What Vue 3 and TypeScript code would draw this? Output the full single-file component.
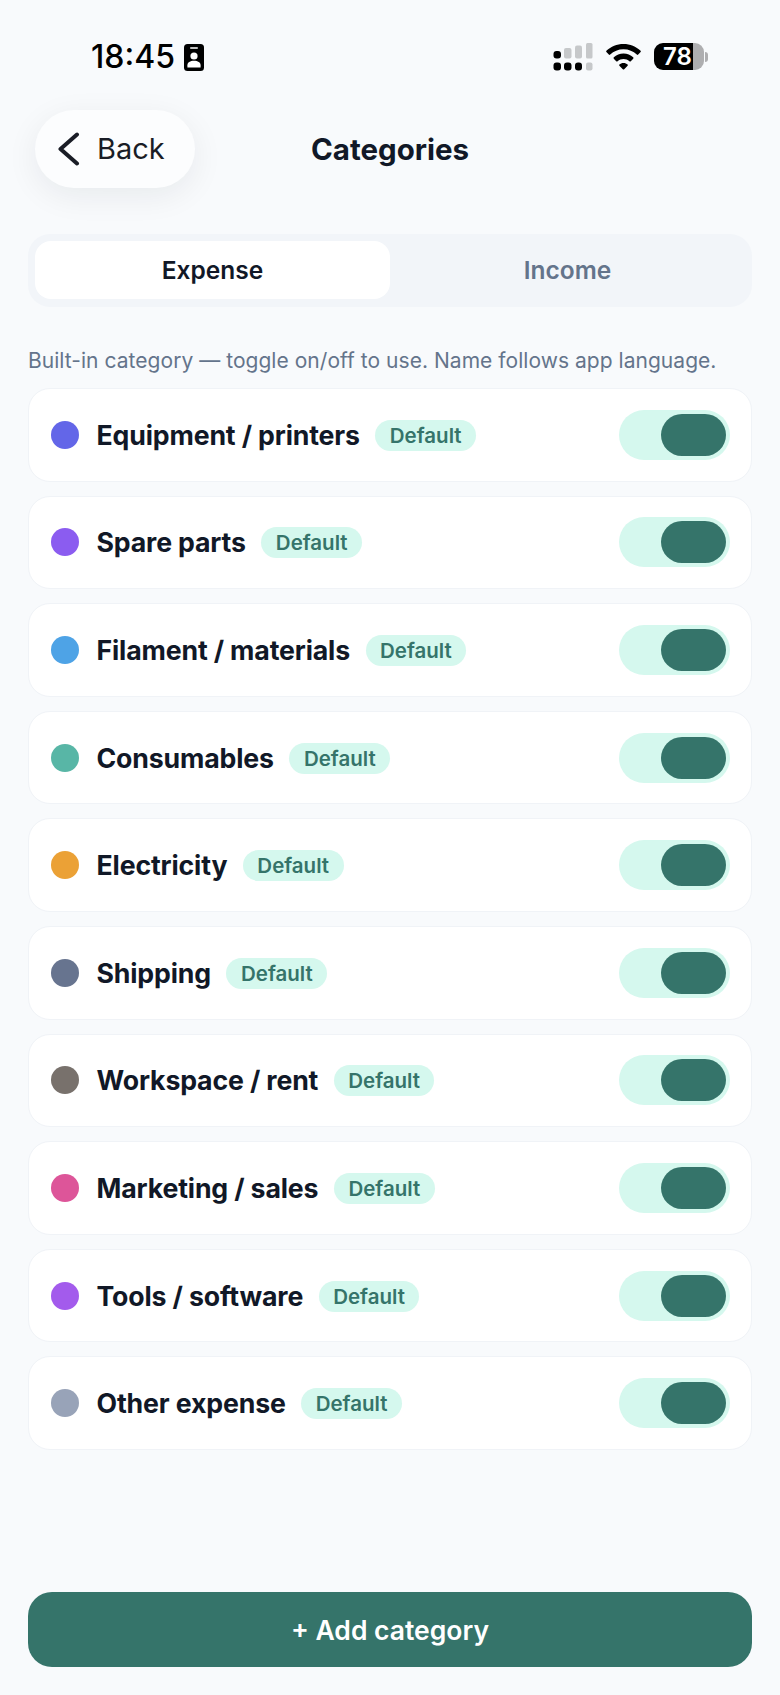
<script setup lang="ts">
interface Category { name: string; color: string }
const categories: Category[] = [
  { name: 'Equipment / printers', color: '#6366e8' },
  { name: 'Spare parts', color: '#8b5cf0' },
  { name: 'Filament / materials', color: '#4ea3e6' },
  { name: 'Consumables', color: '#58b6a6' },
  { name: 'Electricity', color: '#eba136' },
  { name: 'Shipping', color: '#67748f' },
  { name: 'Workspace / rent', color: '#78716c' },
  { name: 'Marketing / sales', color: '#dd5599' },
  { name: 'Tools / software', color: '#a35bec' },
  { name: 'Other expense', color: '#98a3b8' },
]
</script>

<template>
  <div class="page">
    <div class="status">
      <div class="status-left">
        <span class="time">18:45</span>
        <svg class="id" width="20" height="27" viewBox="0 0 20 27">
          <rect width="20" height="27" rx="3.5" fill="#000" />
          <rect x="6" y="3.2" width="8" height="1.6" rx=".8" fill="#fff" />
          <circle cx="10" cy="12" r="3.6" fill="#fff" />
          <path d="M3.4 23.5v-2.2c0-3 2.8-4.5 6.600-4.500s6.600 1.500 6.600 4.500v2.200z" fill="#fff" />
        </svg>
      </div>
      <div class="status-right">
        <svg width="40" height="28" viewBox="0 0 40 28">
          <rect x="0.500" y="8" width="7.500" height="7.500" rx="3" fill="#000" />
          <rect x="0.500" y="19.500" width="7.500" height="8" rx="3" fill="#000" />
          <rect x="11" y="5" width="7.500" height="10.500" rx="2" fill="#c6c8ca" />
          <rect x="11" y="19.500" width="7.500" height="8" rx="3" fill="#000" />
          <rect x="22" y="2.500" width="7" height="13" rx="2" fill="#c6c8ca" />
          <rect x="22" y="19.500" width="7" height="8" rx="3" fill="#000" />
          <rect x="33" y="0" width="6.500" height="15.500" rx="1.500" fill="#c6c8ca" />
          <rect x="33" y="19.500" width="6.500" height="8" rx="2" fill="#c6c8ca" />
        </svg>
        <svg class="wifi" width="35" height="26" viewBox="0 0 35 26">
          <path d="M17.500 0C10.800 0 5 2.500.4 6.700c-.4.400-.4 1 0 1.400l2.400 2.500c.4.400 1 .4 1.400 0 3.500-3.300 8.100-5.300 13.300-5.300s9.800 2 13.300 5.300c.4.400 1 .4 1.400 0l2.400-2.500c.4-.400.4-1 0-1.400C30 2.500 24.200 0 17.500 0z" fill="#000" />
          <path d="M17.500 9.500c-3.700 0-7.100 1.400-9.700 3.800-.4.400-.4 1 0 1.400l2.400 2.500c.4.400 1 .4 1.400 0 1.600-1.400 3.600-2.200 5.900-2.200s4.300.8 5.900 2.200c.4.400 1 .4 1.400 0l2.400-2.500c.4-.4.4-1 0-1.400-2.600-2.400-6-3.800-9.600-3.800z" fill="#000" />
          <path d="M17.500 19c-1.700 0-3.100.6-4.100 1.500-.4.300-.4.900 0 1.300l3.400 3.500c.4.400 1 .4 1.400 0l3.400-3.500c.4-.4.4-1 0-1.300-1-.9-2.400-1.500-4.100-1.500z" fill="#000" />
        </svg>
        <div class="battery">
          <div class="batt-body"><span>78</span></div>
          <div class="batt-nub"></div>
        </div>
      </div>
    </div>

    <div class="header">
      <button class="back">
        <svg width="23" height="34" viewBox="0 0 23 34" fill="none">
          <path d="M20 2.500 3.500 17 20 31.500" stroke="#1a1d26" stroke-width="4" stroke-linecap="round" stroke-linejoin="round" />
        </svg>
        <span>Back</span>
      </button>
      <h1 class="title">Categories</h1>
      <div></div>
    </div>

    <div class="segment">
      <div class="tab active">Expense</div>
      <div class="tab">Income</div>
    </div>

    <p class="hint">Built-in category — toggle on/off to use. Name follows app language.</p>

    <div class="list">
      <div v-for="c in categories" :key="c.name" class="card">
        <span class="dot" :style="{ background: c.color }"></span>
        <span class="name">{{ c.name }}</span>
        <span class="badge">Default</span>
        <div class="toggle"><div class="knob"></div></div>
      </div>
    </div>

    <button class="add">+ Add category</button>
  </div>
</template>

<style>
html, body { margin: 0; background: #f8fafc; }
</style>

<style scoped>
.page {
  width: 780px;
  height: 1695px;
  box-sizing: border-box;
  background: #f8fafc;
  padding: 0 28px 28px;
  display: flex;
  flex-direction: column;
  font-family: Inter, "Liberation Sans", sans-serif;
  font-kerning: normal;
  text-rendering: optimizeLegibility;
  color: #111827;
  overflow: hidden;
}
.status {
  height: 109px;
  padding: 43px 44px 0 63px;
  box-sizing: border-box;
  display: flex;
  justify-content: space-between;
  align-items: flex-start;
  flex: none;
}
.status-left { display: flex; align-items: center; gap: 9px; height: 28px; }
.time { font-size: 32px; font-weight: 500; color: #000; line-height: 28px; }
.status-right { display: flex; align-items: flex-start; gap: 13px; }
.wifi { margin-top: 1px; }
.battery { display: flex; align-items: center; gap: 1px; }
.batt-body {
  width: 50px;
  height: 27px;
  border-radius: 9px;
  background: linear-gradient(90deg, #000 0 78%, #aeaeb0 78% 100%);
  display: flex;
  align-items: center;
  padding-left: 9px;
  box-sizing: border-box;
}
.batt-body span { color: #fff; font-size: 24px; font-weight: 600; line-height: 27px; }
.batt-nub { width: 3px; height: 10px; border-radius: 0 3px 3px 0; background: #aeaeb0; }
.header {
  height: 79px;
  padding: 0 7px;
  display: grid;
  grid-template-columns: 1fr auto 1fr;
  align-items: center;
  flex: none;
}
.back {
  width: 160px;
  height: 78px;
  border: none;
  border-radius: 39px;
  background: #fcfdfe;
  box-shadow: 0 8px 32px rgba(15, 23, 42, 0.07);
  display: flex;
  align-items: center;
  gap: 17px;
  padding: 0 0 0 22px;
  font: 400 29px Inter, sans-serif;
  color: #1a1d26;
}
.title { margin: 0; font-size: 29.500px; font-weight: 700; color: #111827; }
.segment {
  margin-top: 46px;
  height: 73px;
  box-sizing: border-box;
  padding: 7px 7px 8px;
  border-radius: 22px;
  background: #f2f5f9;
  display: grid;
  grid-template-columns: 1fr 1fr;
  flex: none;
}
.tab {
  display: flex;
  align-items: center;
  justify-content: center;
  font-size: 24.500px;
  font-weight: 600;
  color: #64748b;
  border-radius: 16px;
}
.tab.active { background: #fff; color: #111827; }
.hint {
  margin: 41px 0 15px;
  font-size: 21px;
  line-height: 25px;
  letter-spacing: 0.040px;
  color: #64748b;
  white-space: nowrap;
}
.list { display: flex; flex-direction: column; gap: 14px; }
.card {
  height: 93.600px;
  box-sizing: border-box;
  background: #fff;
  border: 1px solid #f0f3f7;
  border-radius: 22px;
  display: flex;
  align-items: center;
  padding: 0 21px 0 22px;
}
.dot { width: 28px; height: 28px; border-radius: 50%; flex: none; }
.name { margin-left: 17.500px; font-size: 26.700px; font-weight: 700; letter-spacing: -0.150px; color: #111827; white-space: nowrap; }
.badge {
  margin: 1px 0 0 15.500px;
  height: 31px;
  padding: 0 14.500px;
  border-radius: 16px;
  background: #d5f8ee;
  color: #35746a;
  font-size: 20.500px;
  font-weight: 600;
  display: flex;
  align-items: center;
}
.toggle {
  margin-left: auto;
  width: 111px;
  height: 50px;
  box-sizing: border-box;
  border-radius: 25px;
  background: #d5f8ee;
  padding: 4px;
  display: flex;
  justify-content: flex-end;
}
.knob { width: 65px; height: 42px; border-radius: 21px; background: #35746a; }
.add {
  margin-top: auto;
  height: 75px;
  flex: none;
  border: none;
  border-radius: 24px;
  background: #35746a;
  color: #fff;
  font: 600 26.500px Inter, sans-serif;
}
</style>
